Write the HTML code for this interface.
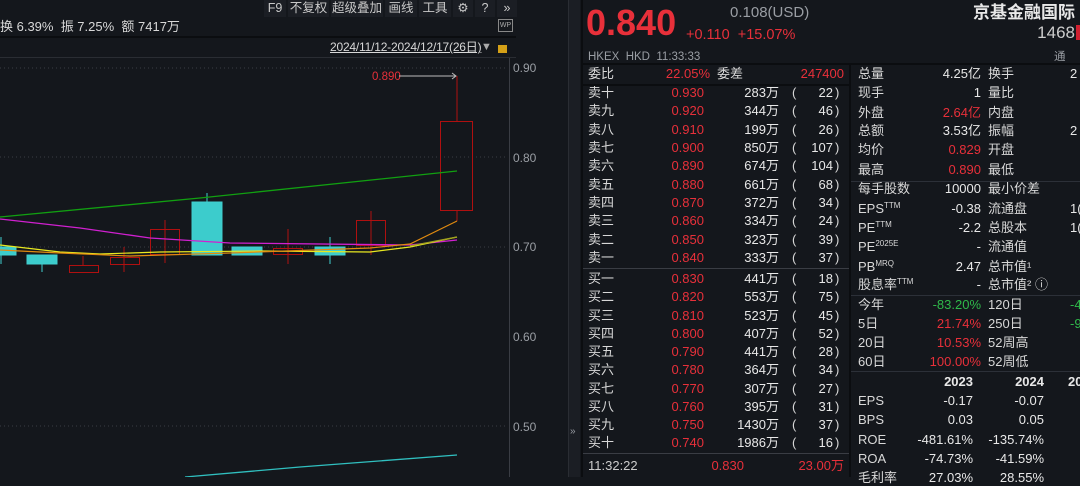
<!DOCTYPE html>
<html><head><meta charset="utf-8"><style>
*{margin:0;padding:0;box-sizing:border-box}
html,body{width:1080px;height:477px}
body{background:#14171c;overflow:hidden;position:relative;font-family:"Liberation Sans","Noto Sans CJK SC",sans-serif;font-size:13px;color:#d8d8d8}
.a{position:absolute;white-space:nowrap;line-height:16px;height:16px}
sup{font-size:8px;line-height:0;vertical-align:5px}
.r{text-align:right}
.red{color:#e8303a}.grn{color:#2fb84a}.gry{color:#9a9ea4}.w{color:#e8e8e8}
.hl{position:absolute;height:1px;background:#2c3038}
.vl{position:absolute;width:1px;background:#2c3038}
.btn{position:absolute;top:0;height:17px;line-height:16px;font-size:12.5px;color:#c8c8c8;background:#1b1e24;text-align:center}
</style></head><body>
<div class="btn" style="left:264px;width:22px">F9</div>
<div class="btn" style="left:288px;width:41px">不复权</div>
<div class="btn" style="left:331px;width:52px">超级叠加</div>
<div class="btn" style="left:385px;width:32px">画线</div>
<div class="btn" style="left:419px;width:32px">工具</div>
<div class="btn" style="left:453px;width:20px">⚙</div>
<div class="btn" style="left:475px;width:20px">?</div>
<div class="btn" style="left:497px;width:20px">»</div>
<div class="a" style="left:0;top:19px;font-size:13px;color:#d8d8d8">换 6.39% &nbsp;振 7.25% &nbsp;额 7417万</div>
<div class="a" style="left:498px;top:19px;width:15px;height:13px;border:1px solid #888;font-size:7px;line-height:11px;text-align:center;color:#aaa">WP</div>
<div class="hl" style="left:0;top:36px;width:516px;background:#0b0d10;height:2px"></div>
<div class="a" style="left:330px;top:39px;font-size:12px;color:#d8d8d8;text-decoration:underline;letter-spacing:-0.2px">2024/11/12-2024/12/17(26日)</div>
<div class="a" style="left:481px;top:39px;font-size:11px;color:#aaa">▼</div>
<div class="a" style="left:498px;top:45px;width:9px;height:8px;background:#d4a017"></div>
<div class="hl" style="left:0;top:57px;width:516px;background:#2a2d33"></div>
<svg style="position:absolute;left:0;top:0" width="580" height="477">
<g stroke="#3a3d44" stroke-dasharray="1,3">
<line x1="0" y1="68" x2="508" y2="68"/><line x1="0" y1="157" x2="508" y2="157"/><line x1="0" y1="247" x2="508" y2="247"/><line x1="0" y1="426" x2="508" y2="426"/>
</g>
<line x1="509.5" y1="58" x2="509.5" y2="477" stroke="#3a3d44"/>
<line x1="568.5" y1="0" x2="568.5" y2="477" stroke="#2a2d33"/>
<rect x="569" y="0" width="11" height="477" fill="#1b1e24"/>
<g fill="#9a9ea4" font-size="12" font-family="Liberation Sans">
<text x="513" y="72">0.90</text><text x="513" y="162">0.80</text><text x="513" y="251">0.70</text><text x="513" y="341">0.60</text><text x="513" y="431">0.50</text>
<text x="570" y="434" font-size="10">»</text>
</g>
<g stroke="#40cfcf" fill="#3ccccc">
<line x1="1" y1="237" x2="1" y2="264"/><rect x="-2" y="247" width="18" height="8"/>
<line x1="42" y1="264" x2="42" y2="272"/><rect x="27" y="255" width="30" height="9"/>
<line x1="207" y1="193" x2="207" y2="202"/><rect x="192" y="202" width="30" height="53"/>
<rect x="232" y="247" width="30" height="8"/>
<line x1="330" y1="237" x2="330" y2="264"/><rect x="315" y="247" width="30" height="8"/>
</g>
<g stroke="#b01010" fill="none">
<line x1="83" y1="256" x2="83" y2="265"/><rect x="69.5" y="265.5" width="29" height="7"/>
<line x1="124" y1="247" x2="124" y2="272"/><rect x="110.5" y="257.5" width="29" height="7"/>
<line x1="165" y1="220" x2="165" y2="263"/><rect x="150.5" y="229.5" width="29" height="25"/>
<line x1="288" y1="229" x2="288" y2="264"/><rect x="273.5" y="248.5" width="29" height="6"/>
<line x1="371" y1="211" x2="371" y2="255"/><rect x="356.5" y="220.5" width="29" height="25"/>
<line x1="457" y1="76" x2="457" y2="121"/><line x1="457" y1="210" x2="457" y2="221"/><rect x="440.5" y="121.5" width="32" height="89"/>
</g>
<polyline fill="none" stroke="#11a011" stroke-width="1.3" points="0,217 200,198 457,171"/>
<polyline fill="none" stroke="#d020d0" stroke-width="1.3" points="0,219 80,228 150,238 230,243 410,245 457,240"/>
<polyline fill="none" stroke="#e8e820" stroke-width="1.2" points="0,245 60,252 100,254 160,252 260,251 370,252 410,247 457,237"/>
<polyline fill="none" stroke="#e08a10" stroke-width="1.2" points="0,250 60,253 130,256 230,253 370,248 410,244 457,221"/>
<polyline fill="none" stroke="#a0a020" stroke-width="1.2" points="410,246 457,237"/>
<polyline fill="none" stroke="#30c0c0" stroke-width="1.3" points="185,477 300,467 457,455"/>
<text x="372" y="80" fill="#e8303a" font-size="11.5" font-family="Liberation Sans">0.890</text>
<line x1="399" y1="76" x2="456" y2="76" stroke="#bbb"/><path d="M452,73 L456,76 L452,79" stroke="#bbb" fill="none"/>
</svg>
<div class="a red" style="left:586px;top:4px;height:38px;font-size:36px;line-height:38px;font-weight:bold">0.840</div>
<div class="a gry" style="left:730px;top:5px;font-size:15px">0.108(USD)</div>
<div class="a red" style="left:686px;top:27px;font-size:14.5px">+0.110 &nbsp;+15.07%</div>
<div class="a w r" style="left:900px;width:175px;top:3px;height:20px;line-height:20px;font-size:17px;font-weight:bold">京基金融国际</div>
<div class="a r" style="left:900px;width:175px;top:23px;font-size:17px;height:20px;line-height:20px;color:#ccc">1468</div>
<div class="a" style="left:1076px;top:25px;width:4px;height:15px;background:#d02030"></div>
<div class="a gry" style="left:588px;top:49px;font-size:11.5px">HKEX &nbsp;HKD &nbsp;11:33:33</div>
<div class="a gry" style="left:1054px;top:49px;font-size:11.5px">通</div>
<div class="hl" style="left:583px;top:63px;width:497px;background:#0b0d10;height:2px"></div>
<div class="vl" style="left:849px;top:64px;height:413px;background:#0b0d10;width:2px"></div>
<div class="vl" style="left:581px;top:0;height:477px;background:#0b0d10;width:2px"></div>
<div id="ob"></div>
<div class="a" style="left:588px;top:66px">委比</div><div class="a red r" style="left:630px;width:80px;top:66px">22.05%</div>
<div class="a" style="left:717px;top:66px">委差</div><div class="a red r" style="left:760px;width:84px;top:66px">247400</div>
<div class="hl" style="left:583px;top:84px;width:266px;background:#0b0d10;height:2px"></div>
<div class="hl" style="left:583px;top:268px;width:266px;background:#3a3d44"></div>
<div class="hl" style="left:583px;top:453px;width:266px;background:#3a3d44"></div>
<div class="a gry" style="left:588px;top:458px;font-size:13px;color:#ccc">11:32:22</div>
<div class="a red r" style="left:680px;width:64px;top:458px">0.830</div>
<div class="a red r" style="left:760px;width:84px;top:458px">23.00万</div>
<div class="hl" style="left:851px;top:181px;width:229px"></div>
<div class="hl" style="left:851px;top:295px;width:229px"></div>
<div class="hl" style="left:851px;top:371px;width:229px"></div>
<div id="st"></div>
<script>
var ob=[["卖十","0.930","283万","22"],["卖九","0.920","344万","46"],["卖八","0.910","199万","26"],["卖七","0.900","850万","107"],["卖六","0.890","674万","104"],["卖五","0.880","661万","68"],["卖四","0.870","372万","34"],["卖三","0.860","334万","24"],["卖二","0.850","323万","39"],["卖一","0.840","333万","37"],
["买一","0.830","441万","18"],["买二","0.820","553万","75"],["买三","0.810","523万","45"],["买四","0.800","407万","52"],["买五","0.790","441万","28"],["买六","0.780","364万","34"],["买七","0.770","307万","27"],["买八","0.760","395万","31"],["买九","0.750","1430万","37"],["买十","0.740","1986万","16"]];
var h="";
ob.forEach(function(r,i){var y=i<10?85+i*18.35:271+(i-10)*18.25;
h+='<div class="a" style="left:588px;top:'+y+'px">'+r[0]+'</div><div class="a red r" style="left:640px;width:64px;top:'+y+'px">'+r[1]+'</div><div class="a w r" style="left:700px;width:79px;top:'+y+'px">'+r[2]+'</div><div class="a" style="left:792px;top:'+y+'px">(</div><div class="a w r" style="left:800px;width:33px;top:'+y+'px">'+r[3]+'</div><div class="a" style="left:835px;top:'+y+'px">)</div>';});
document.getElementById("ob").outerHTML=h;
var st=[["总量","4.25亿","w","换手","2"],["现手","1","w","量比",""],["外盘","2.64亿","red","内盘",""],["总额","3.53亿","w","振幅","2"],["均价","0.829","red","开盘",""],["最高","0.890","red","最低",""],["每手股数","10000","w","最小价差",""],
["EPS<sup>TTM</sup>","-0.38","w","流通盘","1("],["PE<sup>TTM</sup>","-2.2","w","总股本","1("],["PE<sup>2025E</sup>","-","w","流通值",""],["PB<sup>MRQ</sup>","2.47","w","总市值¹",""],["股息率<sup>TTM</sup>","-","w","总市值² ⓘ",""],
["今年","-83.20%","grn","120日","-4"],["5日","21.74%","red","250日","-9"],["20日","10.53%","red","52周高",""],["60日","100.00%","red","52周低",""]];
var ys=[66,85,105,123,142,162,181,201,220,239,259,277,297,316,335,354];
h="";
st.forEach(function(r,i){var y=ys[i];var c=r[4].charAt(0)=="-"?"grn":"w";
h+='<div class="a" style="left:858px;top:'+y+'px">'+r[0]+'</div><div class="a r '+r[2]+'" style="left:900px;width:81px;top:'+y+'px">'+r[1]+'</div><div class="a" style="left:988px;top:'+y+'px">'+r[3]+'</div><div class="a '+c+'" style="left:1070px;top:'+y+'px">'+r[4]+'</div>';});
h+='<div class="a w r" style="left:900px;width:73px;top:374px;font-weight:bold">2023</div><div class="a w r" style="left:980px;width:64px;top:374px;font-weight:bold">2024</div><div class="a w" style="left:1068px;top:374px;font-weight:bold">20</div>';
var f=[["EPS","-0.17","-0.07"],["BPS","0.03","0.05"],["ROE","-481.61%","-135.74%"],["ROA","-74.73%","-41.59%"],["毛利率","27.03%","28.55%"]];
f.forEach(function(r,i){var y=393+i*19.3;h+='<div class="a" style="left:858px;top:'+y+'px">'+r[0]+'</div><div class="a w r" style="left:880px;width:93px;top:'+y+'px">'+r[1]+'</div><div class="a w r" style="left:960px;width:84px;top:'+y+'px">'+r[2]+'</div>';});
document.getElementById("st").outerHTML=h;
</script>
</body></html>
